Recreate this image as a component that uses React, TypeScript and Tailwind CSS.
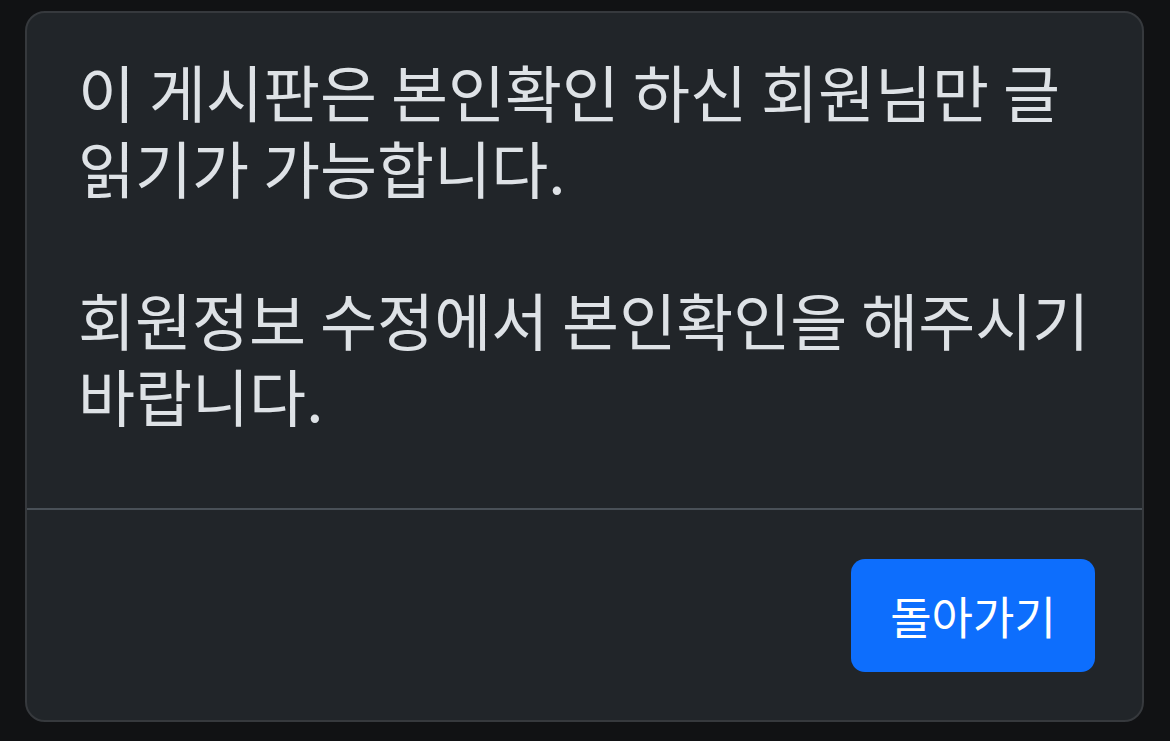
export default function App() {
    return (
        <div className="min-h-screen bg-[#111214] px-[25px] py-[11px] font-['Noto_Sans_CJK_KR','Noto_Sans',sans-serif]">
            {/* Notice modal */}
            <div className="w-[1119px] h-[711px] flex flex-col rounded-[20px] border-2 border-[#36393d] bg-[#212529] overflow-hidden">
                <div className="flex-1 pl-[51px] pr-[40px] pt-[40px] text-[62px] leading-[76px] text-[#dee2e6] whitespace-nowrap">
                    <p>
                        이 게시판은 본인확인 하신 회원님만 글
                        <br />
                        읽기가 가능합니다.
                    </p>
                    <br />
                    <p>
                        회원정보 수정에서 본인확인을 해주시기
                        <br />
                        바랍니다.
                    </p>
                </div>
                <div className="border-t-2 border-[#495057] flex justify-end px-[47px] pt-[49px] pb-[48px]">
                    <button className="w-[244px] h-[113px] rounded-[14px] bg-[#0d6efd] text-white text-[45px]">
                        돌아가기
                    </button>
                </div>
            </div>
        </div>
    );
}
